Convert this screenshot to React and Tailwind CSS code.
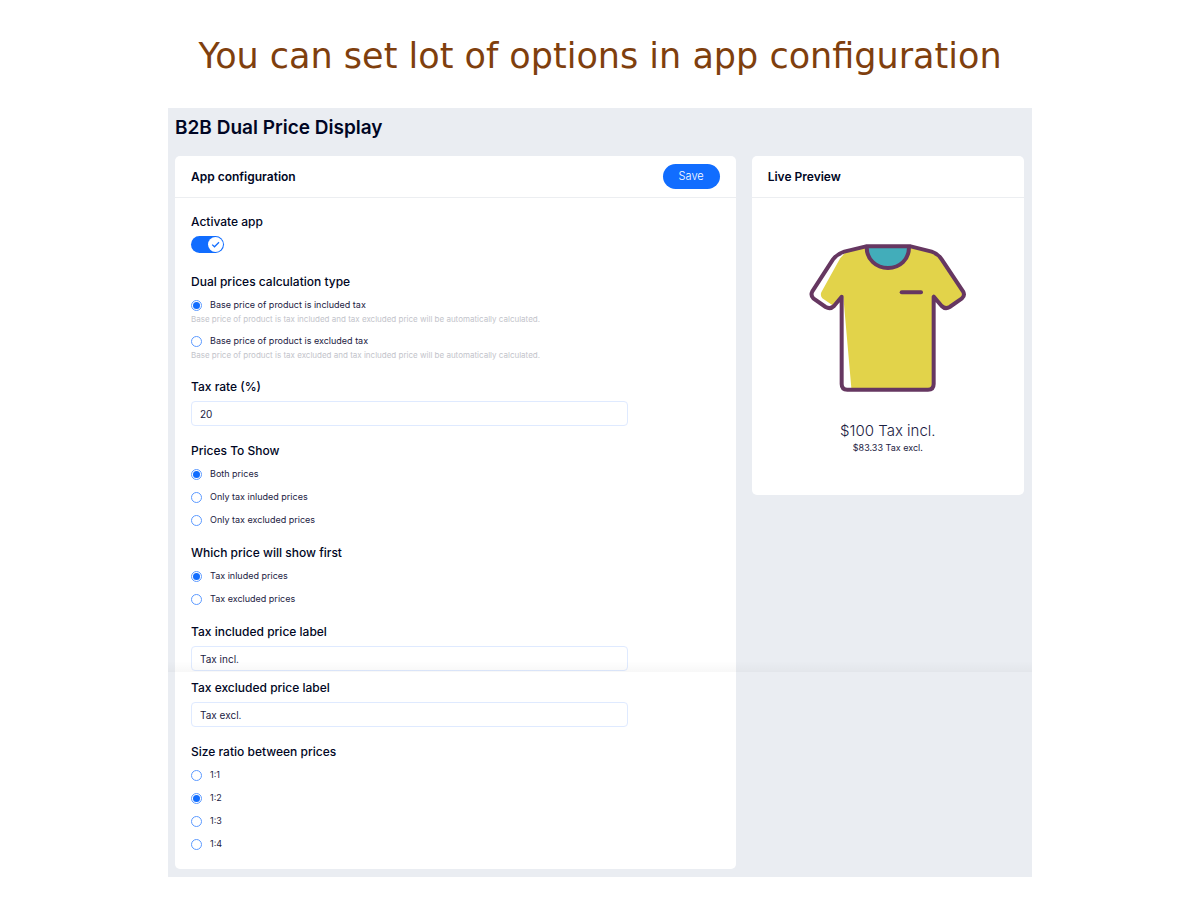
import { useState } from "react";

function Radio({ name, label, checked, onChange }) {
  return (
    <label className="flex h-[18px] w-fit cursor-pointer items-center gap-2 text-[9px] text-[#1b2142]">
      <input
        type="radio"
        name={name}
        checked={checked}
        onChange={onChange}
        className="grid size-[11px] shrink-0 appearance-none place-items-center rounded-full border border-[#5c9aff] bg-white before:size-[7px] before:rounded-full checked:before:bg-[#116dff]"
      />
      {label}
    </label>
  );
}

function RadioGroup({ title, name, options, initial, className }) {
  const [value, setValue] = useState(initial);
  const hinted = options.some((o) => o.hint);
  return (
    <fieldset className={className}>
      <legend className="mb-1 text-xs leading-5 font-medium">{title}</legend>
      <div className={hinted ? "flex flex-col gap-[7px]" : "flex flex-col gap-[5px]"}>
        {options.map((o, i) => (
          <div key={o.label}>
            <Radio name={name} label={o.label} checked={value === i} onChange={() => setValue(i)} />
            {o.hint && <p className="text-[8px] leading-[11px] text-[#c3c4cb]">{o.hint}</p>}
          </div>
        ))}
      </div>
    </fieldset>
  );
}

function TextField({ id, label, value, className }) {
  return (
    <div className={className}>
      <label htmlFor={id} className="mb-1 block text-xs leading-5 font-medium">
        {label}
      </label>
      <input
        id={id}
        type="text"
        defaultValue={value}
        className="block h-[25px] w-full max-w-[437px] rounded border border-[#dfeaff] bg-transparent px-2 text-[10px] text-[#1b2142] outline-none focus:border-[#116dff]"
      />
    </div>
  );
}

function Shirt() {
  return (
    <svg viewBox="54 36 480 456" className="h-[152px] w-40" fill="none" role="img" aria-label="T-shirt">
      <path
        d="M170 66 L228 49 H362 L425 65 Q444 72 455 88 L520 183 Q527 196 518 205 L479 232 Q465 240 455 229 L431 200 V463 Q431 474 417 474 H184 L160 200 H155 L132 229 L97 205 Q90 196 94 187 L143 98 Q152 78 170 66 Z"
        fill="#e2d34a"
      />
      <path d="M230 49 C230 88 258 114 294 114 C330 114 357 88 357 49 Z" fill="#42adba" />
      <g stroke="#663761" strokeWidth="12" strokeLinecap="round" strokeLinejoin="round">
        <path d="M228 49 H362 L425 65 Q444 71 455 88 L519 184 Q526 196 516 205 L479 231 Q466 239 455 228 L431 200 V462 Q431 479 414 479 H172 Q155 479 155 462 V200 L132 228 Q121 239 107 231 L70 205 Q61 196 67 184 L129 88 Q141 72 163 65 Z" />
        <path d="M230 52 C230 88 258 114 294 114 C330 114 357 88 357 52" />
        <path d="M335 187 H393" />
      </g>
    </svg>
  );
}

export default function App() {
  const [active, setActive] = useState(true);
  return (
    <div className="min-h-screen bg-white pb-6 font-['Inter','Noto_Sans',sans-serif] text-[#000624]">
      <h1 className="pt-8 text-center font-['DejaVu_Sans',sans-serif] text-[35px] leading-[48px] text-[#7f3f0e]">
        You can set lot of options in app configuration
      </h1>

      <main className="relative mx-auto mt-7 w-[72%] bg-[#eaedf2] pr-2 pb-2 pl-[7px]">
        <h2 className="pt-1.5 pb-3.5 text-[19px] leading-7 font-semibold">B2B Dual Price Display</h2>

        <div className="grid grid-cols-[minmax(0,560fr)_minmax(0,272fr)] items-start gap-4">
          <section className="rounded-[5px] bg-white">
            <header className="flex h-[42px] items-center justify-between border-b border-[#eceef1] px-4">
              <h3 className="text-xs font-semibold">App configuration</h3>
              <button type="button" className="h-[25px] rounded-full bg-[#116dff] px-4 text-[11px] font-light text-white">
                Save
              </button>
            </header>

            <form className="px-4 pt-3.5 pb-4">
              <div>
                <label htmlFor="activate" className="mb-1 block w-fit text-xs leading-5 font-medium">
                  Activate app
                </label>
                <div className="relative h-[17px] w-[33px]">
                  <input
                    id="activate"
                    type="checkbox"
                    checked={active}
                    onChange={() => setActive(!active)}
                    className="peer block h-[17px] w-[33px] cursor-pointer appearance-none rounded-full bg-[#b6c1cd] checked:bg-[#116dff]"
                  />
                  <span className="pointer-events-none absolute top-px left-px grid size-[15px] place-items-center rounded-full bg-white peer-checked:left-[17px]">
                    {active && (
                      <svg viewBox="0 0 9 9" className="size-[9px]" fill="none" stroke="#116dff" strokeWidth="1.3">
                        <path d="M1.2 4.6 L3.5 6.8 L8 2.3" />
                      </svg>
                    )}
                  </span>
                </div>
              </div>

              <RadioGroup
                className="mt-[19px]"
                title="Dual prices calculation type"
                name="calculation"
                initial={0}
                options={[
                  {
                    label: "Base price of product is included tax",
                    hint: "Base price of product is tax included and tax excluded price will be automatically calculated.",
                  },
                  {
                    label: "Base price of product is excluded tax",
                    hint: "Base price of product is tax excluded and tax included price will be automatically calculated.",
                  },
                ]}
              />
              <TextField className="mt-4" id="rate" label="Tax rate (%)" value="20" />
              <RadioGroup
                className="mt-[15px]"
                title="Prices To Show"
                name="show"
                initial={0}
                options={[
                  { label: "Both prices" },
                  { label: "Only tax inluded prices" },
                  { label: "Only tax excluded prices" },
                ]}
              />
              <RadioGroup
                className="mt-3.5"
                title="Which price will show first"
                name="first"
                initial={0}
                options={[{ label: "Tax inluded prices" }, { label: "Tax excluded prices" }]}
              />
              <TextField className="mt-3.5" id="incl" label="Tax included price label" value="Tax incl." />
              <TextField className="mt-[7px]" id="excl" label="Tax excluded price label" value="Tax excl." />
              <RadioGroup
                className="mt-[15px]"
                title="Size ratio between prices"
                name="ratio"
                initial={1}
                options={[{ label: "1:1" }, { label: "1:2" }, { label: "1:3" }, { label: "1:4" }]}
              />
            </form>
          </section>

          <section className="rounded-[5px] bg-white">
            <header className="flex h-[42px] items-center border-b border-[#eceef1] px-4">
              <h3 className="text-xs font-semibold">Live Preview</h3>
            </header>
            <div className="flex flex-col items-center pt-11 pb-10 text-[#1b2142]">
              <Shirt />
              <p className="mt-7 text-[15px] leading-[18px] font-light">$100 Tax incl.</p>
              <p className="text-[9px] leading-[15px]">$83.33 Tax excl.</p>
            </div>
          </section>
        </div>

        <div className="pointer-events-none absolute inset-x-0 top-[553px] h-[11px] bg-linear-to-b from-transparent to-black/[0.03]" />
      </main>
    </div>
  );
}
